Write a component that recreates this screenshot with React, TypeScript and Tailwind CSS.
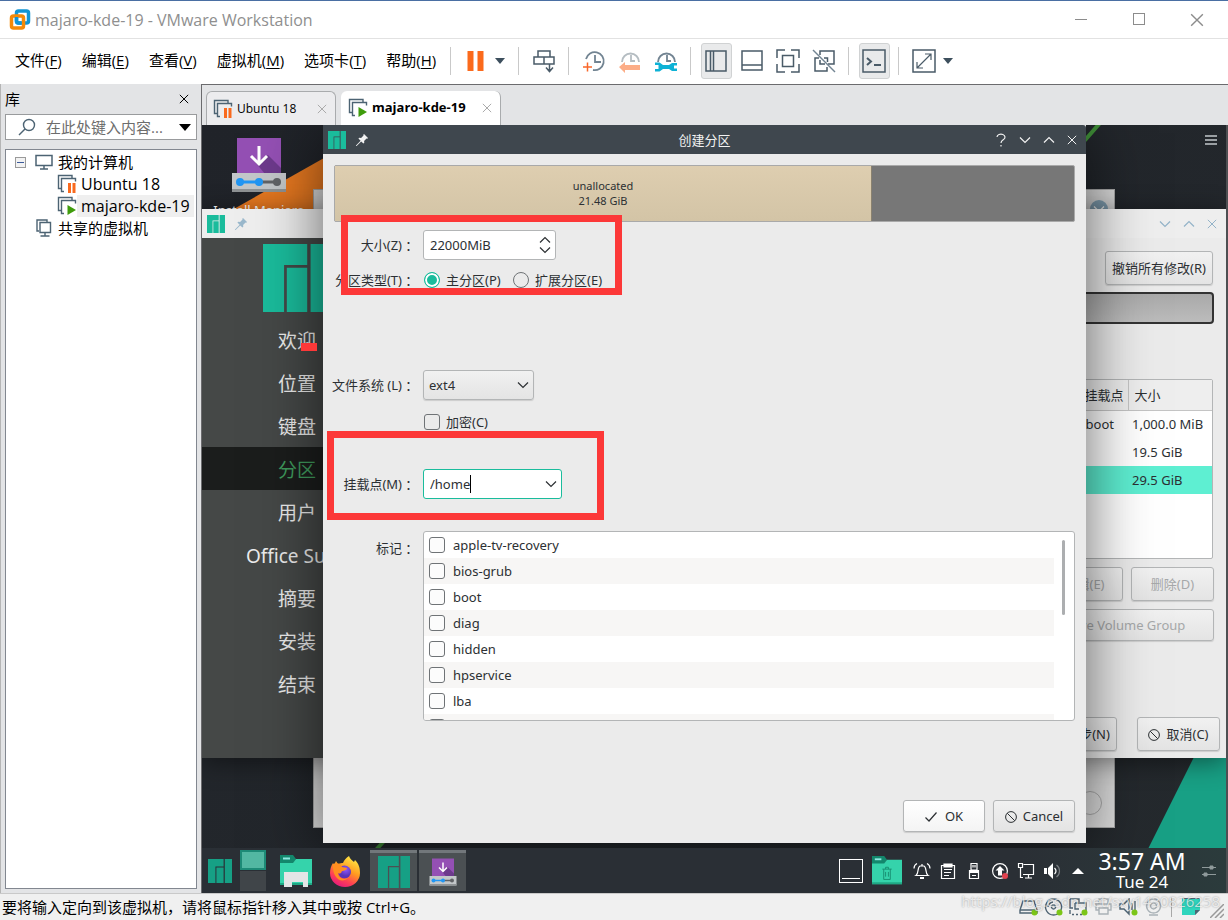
import { useState, type ReactNode } from 'react'
import clsx from 'clsx'

const MENUS = [
  ['文件', 'F'],
  ['编辑', 'E'],
  ['查看', 'V'],
  ['虚拟机', 'M'],
  ['选项卡', 'T'],
  ['帮助', 'H'],
]

const STEPS = ['欢迎', '位置', '键盘', '分区', '用户', 'Office Suite', '摘要', '安装', '结束']

const FLAGS = ['apple-tv-recovery', 'bios-grub', 'boot', 'diag', 'hidden', 'hpservice', 'lba', 'lvm']

const PARTITIONS = [
  { mount: '/boot', size: '1,000.0 MiB' },
  { mount: '', size: '19.5 GiB' },
  { mount: '', size: '29.5 GiB', selected: true },
]

const WIN = "font-['Open_Sans','Noto_Sans_CJK_SC',sans-serif]"
const KDE = "font-['Noto_Sans','Noto_Sans_CJK_SC',sans-serif]"

type ChevronProps = { up?: boolean; className?: string }

const Chevron = ({ up, className }: ChevronProps) => (
  <svg viewBox="0 0 12 8" className={clsx('h-2 w-3', className)} fill="none" stroke="currentColor" strokeWidth="1.2">
    <path d={up ? 'M1 6.5 6 1.5l5 5' : 'M1 1.5l5 5 5-5'} />
  </svg>
)

const Cross = ({ className }: { className?: string }) => (
  <svg viewBox="0 0 12 12" className={className} fill="none" stroke="currentColor" strokeWidth="1.2">
    <path d="M1 1l10 10M11 1 1 11" />
  </svg>
)

const ManjaroLogo = ({ className }: { className?: string }) => (
  <svg viewBox="0 0 100 100" className={className} fill="currentColor">
    <path d="M0 0h65v31H31v69H0zM35 35h30v65H35zM70 0h30v100H70z" />
  </svg>
)

const Pin = ({ className }: { className?: string }) => (
  <svg viewBox="0 0 12 12" className={className} fill="currentColor">
    <path d="M7.3.7 8 0l4 4-.7.7-.8-.2-2.4 2.4.2 1.8-.9.9-2.2-2.2L.6 12H0v-.6l4.6-4.6L2.4 4.6l.9-.9 1.8.2 2.4-2.4z" />
  </svg>
)

const Forbidden = () => (
  <svg viewBox="0 0 12 12" className="size-3" fill="none" stroke="currentColor">
    <circle cx="6" cy="6" r="5.4" />
    <path d="M2.2 2.2l7.6 7.6" />
  </svg>
)

const VmIcon = ({ state }: { state: 'paused' | 'running' }) => (
  <svg viewBox="0 0 20 20" className="size-5" fill="none" stroke="#4c6373" strokeWidth="1.4">
    <path d="M4.500 14.500H1.500V1.500H15v3" />
    <path d="M7 17.500H4.500V4.500H18.500v3" />
    {state === 'paused' ? (
      <path d="M12.500 9v10M17 9v10" stroke="#f96a1e" strokeWidth="3" />
    ) : (
      <path d="M10.500 9v10l8.500-5z" fill="#3f9c0c" stroke="none" />
    )}
  </svg>
)

const InstallIcon = ({ className }: { className?: string }) => (
  <svg viewBox="0 0 56 56" className={className}>
    <path d="M6 1h44v36H6z" fill="#9450b4" />
    <path d="M28 25l9-7 13 13v6H34L20 20z" fill="#6d3a8c" />
    <path d="M28 9v17M20 19l8 8 8-8" fill="none" stroke="#fff" strokeWidth="3" />
    <path d="M1 36h54v19H1z" fill="#c3c7c9" />
    <path d="M1 52h54v3H1z" fill="#909496" />
    <path d="M9 45h18" stroke="#2196f3" strokeWidth="3" />
    <path d="M28 45h18" stroke="#606366" strokeWidth="3" />
    <circle cx="9" cy="45" r="4" fill="#2196f3" />
    <circle cx="28" cy="45" r="4" fill="#2196f3" />
    <circle cx="46" cy="45" r="4" fill="#606366" />
  </svg>
)

const Sep = () => <span className="mr-[7px] ml-1.5 h-7 w-px shrink-0 bg-[#c9c9c9]" />

type ToolProps = { label: string; active?: boolean; children: ReactNode }

const Tool = ({ label, active, children }: ToolProps) => (
  <button aria-label={label} className="flex h-9 w-9 shrink-0 items-center justify-center">
    <span
      className={clsx(
        'flex h-9 w-[31px] items-center justify-center rounded-[3px]',
        active && 'border border-[#d0d2d3] bg-[#e9eaeb]',
      )}
    >
      <svg viewBox="0 0 24 24" className="size-6 shrink-0" fill="none" stroke="#4a5b68" strokeWidth="1.5">
        {children}
      </svg>
    </span>
  </button>
)

const Caret = ({ label }: { label: string }) => (
  <button aria-label={label} className="flex h-9 w-3 shrink-0 items-center justify-center">
    <svg viewBox="0 0 10 6" className="h-1.5 w-2.5" fill="#3d4f5d">
      <path d="M0 0h10L5 6z" />
    </svg>
  </button>
)

const TitleBar = () => (
  <header className="flex h-[38px] shrink-0 items-center border-t border-[#4a6fa3] bg-white pl-2">
    <svg viewBox="0 0 24 24" className="size-6" fill="none" strokeWidth="3.500">
      <rect x="8.500" y="3" width="12" height="12" rx="2" stroke="#1295d3" />
      <rect x="3.500" y="8" width="12" height="12" rx="2" stroke="#f58a07" />
      <path d="M8.500 9v4a2 2 0 0 0 2 2h3" stroke="#1295d3" />
    </svg>
    <h1 className="ml-[3px] flex-1 text-base text-[#8f8f8f]">majaro-kde-19 - VMware Workstation</h1>
    <div className="flex text-[#8c8c8c]">
      <button aria-label="最小化" className="flex w-[58px] justify-center">
        <span className="h-px w-3 self-center bg-[#8c8c8c]" />
      </button>
      <button aria-label="最大化" className="flex w-[58px] justify-center">
        <span className="size-3 border border-[#8c8c8c]" />
      </button>
      <button aria-label="关闭" className="mr-[2px] flex w-[58px] justify-center">
        <Cross className="size-3.5" />
      </button>
    </div>
  </header>
)

const MenuBar = () => (
  <div className="flex h-[46px] shrink-0 items-center border-t border-[#e2e2e2] bg-white pb-0.5 pl-[5px]">
    <nav className="flex w-[439px] shrink-0 text-[15px]">
      {MENUS.map(([name, key]) => (
        <button key={key} className="shrink-0 px-2.5 whitespace-nowrap">
          {name}(<u className="underline-offset-2">{key}</u>)
        </button>
      ))}
    </nav>
    <Sep />
    <Tool label="挂起">
      <path d="M6.500 2v20M16.500 2v20" stroke="#fb6a1c" strokeWidth="6" />
    </Tool>
    <Caret label="电源选项" />
    <span className="w-1.5" />
    <Sep />
    <Tool label="发送 Ctrl+Alt+Del">
      <path d="M6 2h12v6H6zM2 8h10v7H2zM12 8h10v7H12zM17.500 15v6M14 18.500l3.500 4 3.500-4" />
    </Tool>
    <Sep />
    <Tool label="拍摄快照">
      <path d="M4 10a9 9 0 1 1 7 11M13 6v7h6" stroke="#728492" strokeWidth="1.8" />
      <path d="M1 18h9M5.500 13.500v9" stroke="#f9672a" />
    </Tool>
    <Tool label="恢复快照">
      <path d="M4 13a8.500 8.500 0 1 1 17 0M13 6v6h4" stroke="#b5bdc2" strokeWidth="1.8" />
      <path d="M1 18l6-5v3h15v5H7v3z" fill="#fcad87" stroke="none" />
    </Tool>
    <Tool label="管理快照">
      <path d="M4 13a8.500 8.500 0 1 1 17 0M13 6v6h4" stroke="#728492" strokeWidth="1.8" />
      <path d="M1 13.500h4.500L9 16h6l3-2h5v2.500h-3v3h3V22h-5l-3-2H9l-3.500 2.500H1V20h3.500v-4H1z" fill="#0eb2d6" stroke="none" />
    </Tool>
    <Sep />
    <Tool label="显示库" active>
      <path d="M2 2h20v20H2zM6.500 2v20M9.500 2v20" />
    </Tool>
    <Tool label="缩略图栏">
      <path d="M2 2h20v19H2zM2 16h20" />
    </Tool>
    <Tool label="控制台视图">
      <path d="M6.500 6.500h11v11h-11zM1 9V1h8M15 1h8v8M1 15v8h8M15 23h8v-8" />
    </Tool>
    <Tool label="Unity">
      <path d="M8 6V2h14v13h-6M7 9H3v13h12v-4M12 9h3.500v4M8 11v4h5" />
      <path d="M1 1l22 22" stroke="#728492" />
    </Tool>
    <Sep />
    <Tool label="控制台" active>
      <path d="M1 1h22v22H1z" />
      <path d="M5 9l4 3.500L5 16M12 16h7" strokeWidth="2" />
    </Tool>
    <Sep />
    <Tool label="全屏">
      <path d="M1 1h22v22H1z" />
      <path d="M5 19 19 5M13 5h6v6M5 13v6h6" strokeWidth="1.200" />
    </Tool>
    <Caret label="全屏选项" />
  </div>
)

const Library = () => (
  <aside className="flex w-[201px] shrink-0 flex-col border-l border-[#b5b5b5] bg-[#e3e4e6] pr-1 pb-1 pl-1 text-[15px]">
    <div className="flex h-[30px] items-center justify-between pr-2">
      <h2>库</h2>
      <button aria-label="关闭库">
        <Cross className="size-2.5" />
      </button>
    </div>
    <label className="flex h-[26px] items-center border border-[#999b9d] bg-white pr-[5px] pl-3">
      <svg viewBox="0 0 18 18" className="size-[18px] shrink-0" fill="none" stroke="#4c6373" strokeWidth="1.400">
        <circle cx="11" cy="7" r="5.500" />
        <path d="M7 11l-6 6" />
      </svg>
      <input
        aria-label="搜索"
        placeholder="在此处键入内容..."
        className="ml-2.5 w-0 flex-1 outline-none placeholder:text-[#6d6d6d]"
      />
      <svg viewBox="0 0 12 7" className="h-[7px] w-3">
        <path d="M0 0h12L6 7z" />
      </svg>
    </label>
    <ul className="mt-[9px] flex-1 border border-[#828790] bg-white pt-px [&>li]:flex [&>li]:h-[22px] [&>li]:items-center">
      <li className="pl-[9px]">
        <button aria-label="折叠" className="flex size-[11px] items-center justify-center border border-[#9a9a9a] bg-[#f2f2f2]">
          <span className="h-px w-[7px] bg-[#3b5a9a]" />
        </button>
        <svg viewBox="0 0 20 16" className="mr-1 ml-2 h-4 w-5" fill="none" stroke="#4c6373" strokeWidth="1.500">
          <path d="M2 1.500h16v10H2zM10 12v3M6 15h8" />
        </svg>
        我的计算机
      </li>
      <li className="pl-[51px]">
        <VmIcon state="paused" />
        <span className="px-1 text-base leading-[22px]">Ubuntu 18</span>
      </li>
      <li className="pl-[51px]">
        <VmIcon state="running" />
        <span className="bg-[#efefef] px-1 text-base leading-[22px] whitespace-nowrap">majaro-kde-19</span>
      </li>
      <li className="pl-7">
        <svg viewBox="0 0 20 20" className="mr-1 size-5" fill="none" stroke="#4c6373" strokeWidth="1.400">
          <path d="M5 13H3V2h10v2M6 4.500h10.500v10H6zM11 14v4M6.500 18h9" />
        </svg>
        共享的虚拟机
      </li>
    </ul>
  </aside>
)

const Tabs = () => (
  <div className="flex h-10 items-end gap-[5px] bg-[#e3e4e6] pt-1.5 pl-1 text-[13px]">
    <div className="flex h-full w-[130px] items-center rounded-t-md border border-b-0 border-[#a9abad] bg-[#ececee] pr-2 pl-1.5">
      <VmIcon state="paused" />
      <button className="ml-1 flex-1 text-left text-xs">Ubuntu 18</button>
      <button aria-label="关闭 Ubuntu 18" className="text-[#aaa]">
        <Cross className="size-2.5" />
      </button>
    </div>
    <div className="flex h-full w-40 items-center rounded-t-md border-r border-[#a9abad] bg-white pr-2 pl-[7px]">
      <VmIcon state="running" />
      <button className="ml-1 flex-1 text-left font-bold whitespace-nowrap">majaro-kde-19</button>
      <button aria-label="关闭 majaro-kde-19" className="text-[#aaa]">
        <Cross className="size-2.5" />
      </button>
    </div>
  </div>
)

const Wallpaper = () => (
  <svg viewBox="0 0 1024 768" preserveAspectRatio="none" className="absolute inset-0 h-full w-full">
    <defs>
      <linearGradient id="night" x2="1" y2="1">
        <stop offset="0" stopColor="#202329" />
        <stop offset="1" stopColor="#252a2e" />
      </linearGradient>
    </defs>
    <path d="M0 0h1024v768H0z" fill="url(#night)" />
    <path d="M30 85 122 33V85z" fill="#e67820" />
    <path d="M870 30 898-2M160 740l24-26" stroke="#409038" strokeWidth="4" />
    <path d="M1024 568v200H924z" fill="#18a085" />
  </svg>
)

const kdeButton =
  'flex items-center justify-center rounded-[3px] border border-[#b3b5b6] bg-linear-to-b from-[#f1f1f1] to-[#e4e4e4] shadow-[0_1px_1px_#0002] whitespace-nowrap'

const Installer = () => (
  <section className="absolute inset-x-0 top-[84px] flex h-[549px] flex-col overflow-hidden bg-[#ebebeb] shadow-[0_4px_24px_#0007]">
    <div className="flex h-[29px] shrink-0 items-center bg-[#eeeeee] px-[5px]">
      <ManjaroLogo className="size-[18px] text-[#1abc9c]" />
      <Pin className="ml-2.5 size-3 text-[#9ab8cc]" />
      <div className="ml-auto flex items-center gap-3 pr-1 text-[#93b3c8]">
        <button aria-label="最小化">
          <Chevron />
        </button>
        <button aria-label="最大化">
          <Chevron up />
        </button>
        <button aria-label="关闭">
          <Cross className="size-2.5" />
        </button>
      </div>
    </div>
    <div className="flex flex-1">
      <aside className="flex w-[190px] shrink-0 flex-col items-center bg-[#454847] pt-1.5 text-[19px] text-[#ececec]">
        <ManjaroLogo className="size-[68px] text-[#1abc9c]" />
        <ol className="mt-1.5 w-full">
          {STEPS.map(step => (
            <li
              key={step}
              className={clsx('flex h-[43px] items-center justify-center pt-1', step === '分区' && 'bg-[#1b1d1c] text-[#3f9b5d]')}
            >
              {step}
            </li>
          ))}
        </ol>
      </aside>
      <div className="flex flex-1 flex-col items-end pr-3 text-[13px] text-[#2c3033]">
        <button className={clsx(kdeButton, 'mt-[13px] mr-px h-[34px] w-[108px] pt-0.5')}>撤销所有修改(R)</button>
        <div className="mt-[7px] h-8 w-[620px] rounded-[4px] border-2 border-[#333] bg-linear-to-b from-[#a9a9a9] to-[#bcbcbc]" />
        <div className="mt-[55px] mr-px h-[180px] w-[620px] rounded-[2px] border border-[#b3b5b6] bg-white">
          <table className="ml-auto w-[180px] table-fixed">
            <thead>
              <tr className="h-[30px] bg-[#eeeeee] text-left [&>th]:border-b [&>th]:border-[#c4c4c4] [&>th]:pt-0.5 [&>th]:font-normal">
                <th className="w-24 border-r pr-1 text-right">挂载点</th>
                <th className="pl-1.5">大小</th>
              </tr>
            </thead>
            <tbody>
              {PARTITIONS.map(p => (
                <tr key={p.size} className={clsx('h-7 whitespace-nowrap', p.selected && 'bg-[#5eefd2]')}>
                  <td className="pr-3.5 text-right">{p.mount}</td>
                  <td className="pt-px pl-1">{p.size}</td>
                </tr>
              ))}
            </tbody>
          </table>
        </div>
        <div className="mt-2 flex gap-2 text-[#a6a8a9]">
          <button disabled className={clsx(kdeButton, 'h-[34px] w-[83px] pt-0.5 pl-[5px]')}>
            编辑(E)
          </button>
          <button disabled className={clsx(kdeButton, 'h-[34px] w-[83px] pt-0.5')}>
            删除(D)
          </button>
        </div>
        <button disabled className={clsx(kdeButton, 'mt-2 h-8 w-[206px] pt-px pl-2 text-[#a6a8a9]')}>
          Remove Volume Group
        </button>
        <div className="mt-auto mb-[7px] flex gap-5 self-end">
          <button className={clsx(kdeButton, 'h-[34px] w-[83px] pt-0.5 pl-3')}>下一步(N)</button>
          <button className={clsx(kdeButton, '-mr-1.5 h-[34px] w-[83px] gap-1.5 pt-0.5')}>
            <Forbidden />
            取消(C)
          </button>
        </div>
      </div>
    </div>
  </section>
)

type RowProps = { label?: string; htmlFor?: string; className?: string; children: ReactNode }

const Row = ({ label, htmlFor, className, children }: RowProps) => (
  <div className={clsx('grid min-h-[30px] grid-cols-[81px_1fr] items-center gap-x-2', className)}>
    {label ? (
      <label htmlFor={htmlFor} className="flex justify-end pt-0.5 whitespace-nowrap">
        {label}
        <span className="font-['Noto_Sans_CJK_TC',sans-serif]">：</span>
      </label>
    ) : (
      <span />
    )}
    {children}
  </div>
)

const box = 'size-4 shrink-0 appearance-none rounded-[3px] border border-[#6f7376] bg-[#fcfcfc] checked:bg-[#1abc9c]'
const radio =
  'size-4 shrink-0 appearance-none rounded-full border border-[#6f7376] checked:border-[#1abc9c] checked:bg-[#1abc9c] checked:shadow-[inset_0_0_0_2px_#fff]'

const PartitionDialog = () => {
  const [size, setSize] = useState('22000MiB')
  const [mount, setMount] = useState('/home')
  const [type, setType] = useState('primary')

  return (
    <section className="absolute top-0 right-[140px] left-[121px] flex h-[718px] flex-col bg-[#ebebeb] text-[13px] text-[#2c3033] shadow-[0_8px_60px_#0009]">
      <div className="flex h-[29px] shrink-0 items-center rounded-tr-[3px] bg-[#3f474e] px-[5px] text-[#f2f2f2]">
        <ManjaroLogo className="size-[18px] text-[#1abc9c]" />
        <Pin className="ml-2.5 size-3" />
        <h2 className="flex-1 pt-0.5 pl-[46px] text-center">创建分区</h2>
        <div className="flex items-center gap-3 pr-1">
          <button aria-label="帮助">
            <svg viewBox="0 0 12 14" className="h-3.5 w-3" fill="none" stroke="currentColor" strokeWidth="1.200">
              <path d="M2 4a4 3 0 1 1 6.500 2.500C7 7.500 6 8 6 10M6 12v1.500" />
            </svg>
          </button>
          <button aria-label="最小化">
            <Chevron />
          </button>
          <button aria-label="最大化">
            <Chevron up />
          </button>
          <button aria-label="关闭">
            <Cross className="size-2.5" />
          </button>
        </div>
      </div>

      <form className="flex flex-1 flex-col px-[11px] pt-[11px] pb-[11px]" onSubmit={e => e.preventDefault()}>
        <div className="flex h-[57px] shrink-0 rounded-[2px] border border-[#a9a9a9] bg-[#777] text-[11px] leading-[15px]">
          <div className="flex w-[537px] flex-col items-center justify-center border-r border-[#8a8270] bg-linear-to-b from-[#deceb0] to-[#d3c4a6] pb-0.5">
            <span>unallocated</span>
            <span>21.48 GiB</span>
          </div>
        </div>

        <Row label="大小(Z)" htmlFor="size" className="mt-2">
          <div className="flex h-[30px] w-[133px] items-center rounded-[3px] border border-[#b3b5b6] bg-white pr-1 pl-1.5">
            <input id="size" value={size} onChange={e => setSize(e.target.value)} className="w-0 flex-1 pt-px outline-none" />
            <span className="flex flex-col gap-0.5">
              <button type="button" aria-label="增加">
                <Chevron up className="block" />
              </button>
              <button type="button" aria-label="减少">
                <Chevron className="block" />
              </button>
            </span>
          </div>
        </Row>
        <Row label="分区类型(T)" htmlFor="primary" className="mt-[5px]">
          <div className="flex items-center">
            <input
              id="primary"
              type="radio"
              name="type"
              className={clsx(radio, 'ml-px')}
              checked={type === 'primary'}
              onChange={() => setType('primary')}
            />
            <label htmlFor="primary" className="ml-1.5 w-[67px] pt-0.5">
              主分区(P)
            </label>
            <input
              id="extended"
              type="radio"
              name="type"
              className={radio}
              checked={type === 'extended'}
              onChange={() => setType('extended')}
            />
            <label htmlFor="extended" className="ml-1.5 pt-0.5">
              扩展分区(E)
            </label>
          </div>
        </Row>
        <Row label="文件系统 (L)" htmlFor="fs" className="mt-[75px]">
          <div className="relative w-[111px]">
            <select id="fs" className={clsx(kdeButton, 'h-[30px] w-full appearance-none pt-px pl-[5px]')}>
              <option>ext4</option>
            </select>
            <Chevron className="pointer-events-none absolute top-[11px] right-[5px]" />
          </div>
        </Row>
        <Row className="mt-[7px]">
          <label className="flex items-center pl-px">
            <input type="checkbox" className={clsx(box, 'bg-transparent')} />
            <span className="pt-0.5 pl-1.5">加密(C)</span>
          </label>
        </Row>
        <Row label="挂载点(M)" htmlFor="mount" className="mt-8">
          <div className="relative flex h-[30px] w-[139px] items-center rounded-[3px] border border-[#1abc9c] bg-white pr-1 pl-1.5">
            <input id="mount" value={mount} onChange={e => setMount(e.target.value)} className="w-0 flex-1 pt-px outline-none" />
            <span className="absolute top-[5px] left-[46px] h-[18px] w-px bg-black" />
            <button type="button" aria-label="选择挂载点">
              <Chevron />
            </button>
          </div>
        </Row>
        <div className="mt-8 grid grid-cols-[81px_1fr] gap-x-2">
          <span className="flex justify-end pt-2 whitespace-nowrap">
            标记<span className="font-['Noto_Sans_CJK_TC',sans-serif]">：</span>
          </span>
          <div className="flex h-[190px] overflow-hidden rounded-[3px] border border-[#b3b5b6] bg-white">
            <ul className="flex-1">
              {FLAGS.map(flag => (
                <li key={flag} className="h-[26px] even:bg-[#f7f6f5]">
                  <label className="flex h-full items-center gap-2 pl-[5px]">
                    <input type="checkbox" className={box} />
                    <span className="pt-px">{flag}</span>
                  </label>
                </li>
              ))}
            </ul>
            <span className="mt-2 mr-[9px] ml-[8px] h-[75px] w-[3px] rounded-full bg-[#acaeb0]" />
          </div>
        </div>

        <div className="mt-auto flex justify-end gap-2 pt-4">
          <button className={clsx(kdeButton, 'h-8 w-[82px] gap-2 from-white to-[#f4f4f4] pt-px')}>
            <svg viewBox="0 0 12 10" className="h-2.5 w-3" fill="none" stroke="currentColor" strokeWidth="1.200">
              <path d="M.5 5.500 4 9l7.500-8.500" />
            </svg>
            OK
          </button>
          <button type="button" className={clsx(kdeButton, 'h-8 w-[82px] gap-1.5 pt-px')}>
            <Forbidden />
            Cancel
          </button>
        </div>
      </form>

      {/* highlight frames */}
      <div className="pointer-events-none absolute top-[90px] left-[18px] h-20 w-[281px] border-[7px] border-[#fc3838]" />
      <div className="pointer-events-none absolute top-[306px] left-1 h-[89px] w-[277px] border-[7px] border-[#fc3838]" />
    </section>
  )
}

const Folder = ({ className, children }: { className?: string; children: ReactNode }) => (
  <svg viewBox="0 0 32 32" className={className}>
    <path d="M0 0h13l3 4-3 5H0z" fill="#13876c" />
    <path d="M0 8h13l3-4h16v26H0z" fill="#35d3ab" />
    <path d="M0 28h32v2H0z" fill="#1fa884" />
    <path d="M3 3.500h7" stroke="#8fe8e0" strokeWidth="2" />
    {children}
  </svg>
)

const Firefox = () => (
  <svg viewBox="0 0 32 32" className="size-8">
    <defs>
      <linearGradient id="fox" x1=".8" y1="0" x2=".3" y2="1">
        <stop offset="0" stopColor="#fff24a" />
        <stop offset=".45" stopColor="#ff9a1f" />
        <stop offset=".75" stopColor="#ff4055" />
        <stop offset="1" stopColor="#e61a7e" />
      </linearGradient>
      <radialGradient id="globe" cx=".6" cy=".3">
        <stop offset="0" stopColor="#9059ff" />
        <stop offset="1" stopColor="#5a34b8" />
      </radialGradient>
    </defs>
    <path
      d="M20 1c1 3 3 4 5 6l1-2c4 4 5 8 5 13a15 14 0 0 1-30 0c0-4 1-7 3-10l1 2 2-4 2 3c2-1 4-1 5-1 1-3 3-5 6-7z"
      fill="url(#fox)"
    />
    <circle cx="15.500" cy="17" r="6.500" fill="url(#globe)" />
    <path d="M4 9c4-2 8 0 9 3l5 1c0 2-3 3-5 3-1 3-3 3-4 2 0 5 6 7 10 5-6 6-16 1-15-14z" fill="#ff8f20" />
  </svg>
)

const Tray = ({ label, children }: { label: string; children: ReactNode }) => (
  <button aria-label={label}>
    <svg viewBox="0 0 16 16" className="size-4 overflow-visible" fill="none" stroke="#fff" strokeWidth="1.200">
      {children}
    </svg>
  </button>
)

const Panel = () => (
  <footer className="absolute inset-x-0 bottom-0 flex h-[45px] items-center bg-linear-to-r from-[#2a2f35] from-80% to-[#2b3b3c] pr-2.5 pl-1.5 text-white">
    <button aria-label="应用程序菜单">
      <ManjaroLogo className="size-6 text-[#16a085]" />
    </button>
    <div className="ml-2 flex w-[26px] flex-col gap-px">
      <button aria-label="桌面 1" className="h-5 border-2 border-[#1d8a76] bg-[#52b7a2]" />
      <button aria-label="桌面 2" className="h-5 bg-[#404549]" />
    </div>
    <button aria-label="文件管理器" className="ml-3.5">
      <Folder className="size-8">
        <path d="M4 17h24v15h-5v-5H12v5H4z" fill="#e4e5e6" />
      </Folder>
    </button>
    <button aria-label="Firefox" className="ml-[17px]">
      <Firefox />
    </button>
    <button aria-label="Manjaro Hello" className="ml-[9px] flex h-[41px] w-[47px] items-center justify-center border-t-[3px] border-[#72777b] bg-[#4b5053]">
      <ManjaroLogo className="size-8 text-[#16a085]" />
    </button>
    <button aria-label="安装程序" className="ml-0.5 flex h-[41px] w-[47px] items-center justify-center border-t-[3px] border-[#72777b] bg-[#4b5053]">
      <InstallIcon className="size-7" />
    </button>
    <div className="ml-auto flex items-center gap-2.5">
      <button aria-label="显示桌面" className="flex size-6 items-end justify-center border border-white pb-[3px]">
        <span className="h-px w-[18px] bg-white" />
      </button>
      <button aria-label="回收站" className="mr-0.5 -ml-px">
        <Folder className="size-[30px]">
          <path d="M11 14h10M12.500 14v11h7V14M14.500 14v-2h3v2M14.500 17v5M17.500 17v5" fill="none" stroke="#178d70" />
        </Folder>
      </button>
      <Tray label="通知">
        <path d="M2 12.500c3-2 1-8 4-9.500h4c3 1.500 1 7.500 4 9.500zM8 1v2" />
        <path d="M6 14h4v2H6z" fill="#fff" stroke="none" />
        <path d="M3 .5C1 1.500 0 3 0 5.500M13 .5c2 1 3 2.500 3 5" />
      </Tray>
      <Tray label="剪贴板">
        <path d="M1.500 2.500h13v13h-13zM4 6.500h8M4 9.500h7M4 12.500h5" />
        <path d="M4 1h8v3H4z" fill="#fff" />
      </Tray>
      <Tray label="设备">
        <path d="M5 .5h6V7H5zM7 2v2.500M9 2v2.500" />
        <path d="M3.500 7.500h9v8h-9zM6 12.500h4" />
        <path d="M3 7h10v3H3z" fill="#fff" stroke="none" />
      </Tray>
      <Tray label="更新">
        <circle cx="8" cy="8" r="7.400" />
        <path d="M8 3l4.500 4.500H10v5H6v-5H3.500z" fill="#fff" stroke="none" />
        <circle cx="13" cy="13" r="3" fill="#e0424f" stroke="none" />
      </Tray>
      <Tray label="网络">
        <path d="M5.500 1.500h10v10H5M7 15h7M10.500 12v3M.5.500h4v4h-4zM2.500 5v9.500H5" />
      </Tray>
      <Tray label="音量">
        <path d="M0 5h3v6H0zM4 5l5-5v16l-5-5z" fill="#fff" stroke="none" />
        <path d="M10.500 5c2 2 2 4 0 6" />
        <path d="M12.500 2c4 3 4 9 0 12" stroke="#777c80" />
      </Tray>
      <Tray label="更多">
        <path d="M2 11h12L8 5z" fill="#fff" stroke="none" />
      </Tray>
      <div className="ml-0.5 flex w-[88px] flex-col items-center whitespace-nowrap">
        <time className="text-[23px] leading-[22px]">3:57 AM</time>
        <time className="text-[17px] leading-5">Tue 24</time>
      </div>
      <button aria-label="面板设置" className="ml-1.5">
        <svg viewBox="0 0 14 12" className="h-3 w-3.5" fill="none" stroke="#8f9a9b">
          <path d="M0 2.500h14M0 9.500h14" />
          <path d="M8 1h3v3H8zM2 8h3v3H2z" fill="#8f9a9b" />
        </svg>
      </button>
    </div>
  </footer>
)

const Desktop = () => (
  <main className={clsx('relative flex-1 overflow-hidden border-r-2 border-[#4d4f52] bg-[#22262b]', KDE)}>
    <Wallpaper />
    <div className="absolute top-3 left-0 flex w-[114px] flex-col items-center text-[13px] text-white">
      <InstallIcon className="size-14" />
      <span className="mt-2 whitespace-nowrap">Install Manjaro</span>
    </div>
    <button aria-label="桌面菜单" className="absolute top-2.5 right-[9px] flex flex-col gap-0.5 [&>span]:h-0.5 [&>span]:w-3 [&>span]:bg-[#9a9fa3]">
      <span />
      <span />
      <span />
    </button>
    <section className="absolute inset-x-[111px] top-[64px] h-[639px] border border-[#a9a9a9] bg-[#dedede]">
      <span className="absolute top-2.5 right-1.5 flex size-[18px] items-center justify-center rounded-full bg-[#86a5b8] text-white">
        <Chevron className="w-2" />
      </span>
      <span className="absolute right-3 bottom-3 size-6 rounded-full border border-[#aaa]" />
    </section>
    <Installer />
    <PartitionDialog />
    <div className="absolute top-[218px] left-[99px] h-2 w-4 bg-[#fc3838]" />
    <Panel />
  </main>
)

const DEVICES = [
  { name: '硬盘', on: true, d: 'M4 3h11l3 9v3H1v-3zM1 12h17' },
  { name: 'CD/DVD', on: true, d: 'M9.500 1a8 8 0 1 0 .1 0M9.500 7a2 2 0 1 0 .1 0M4 9a6 6 0 0 1 5-5' },
  { name: '网络适配器', on: true, d: 'M1 1h9v3M1 1v9h3M6 5h11v8M6 5v6h4M10 1v3M1 12v4M3 16.500h2M7 16.500h2M11 16.500h2' },
  { name: '打印机', on: false, d: 'M5 6V1h9v5M5 12H2V6h15v6h-3M5 10h9v6H5z' },
  { name: '声卡', on: true, d: 'M1 6h4l5-5v15l-5-5H1zM13 5v7M16 3v10' },
  { name: '摄像头', on: false, d: 'M9.500 1a7 7 0 1 0 .1 0M9.500 5a3 3 0 1 0 .1 0M5 17h9' },
]

const StatusBar = () => (
  <footer className="relative flex h-[27px] shrink-0 items-center border-t border-[#c9c9c9] bg-[#f0f0f0] pl-0.5 text-[15px]">
    <p className="flex-1 pt-px whitespace-nowrap">要将输入定向到该虚拟机，请将鼠标指针移入其中或按 Ctrl+G。</p>
    <div className="flex items-center gap-1.5 pr-7">
      {DEVICES.map(dev => (
        <button key={dev.name} aria-label={dev.name}>
          <svg viewBox="0 0 19 18" className="h-[18px] w-[19px]" fill="none" stroke={dev.on ? '#4f6473' : '#a9b1b6'} strokeWidth="1.400">
            <path d={dev.d} />
            {dev.on && <circle cx="15.500" cy="14.500" r="3" fill="#7cc518" stroke="none" />}
          </svg>
        </button>
      ))}
      <span className="ml-0.5 h-5 w-px bg-[#a8a8a8]" />
      <button aria-label="消息" className="ml-1">
        <svg viewBox="0 0 18 18" className="size-[18px]">
          <path d="M0 0h18v12l-5 5H0z" fill="#2fd5bd" />
          <path d="M18 12h-5v5z" fill="#4f6473" />
          <path d="M.5.500h17" stroke="#4f6473" />
        </svg>
      </button>
    </div>
    <svg viewBox="0 0 14 14" className="absolute right-1 bottom-0.5 size-3.5" stroke="#999" strokeWidth="1.500">
      <path d="M0 14 14 0M5 14l9-9M10 14l4-4" />
    </svg>
    <span className="pointer-events-none absolute -top-1 right-2 text-[15px] leading-[22px] whitespace-nowrap text-white/70 [text-shadow:0_0_2px_#0006]">
      https://blog.csdn.net/sxy1430826258
    </span>
  </footer>
)

export default function App() {
  return (
    <div className={clsx('flex h-screen min-h-[720px] flex-col bg-[#e3e4e6] text-black', WIN)}>
      <TitleBar />
      <MenuBar />
      <div className="flex min-h-0 flex-1">
        <Library />
        <div className="flex min-w-0 flex-1 flex-col border-t border-l border-[#6b6b6e]">
          <Tabs />
          <Desktop />
        </div>
      </div>
      <StatusBar />
    </div>
  )
}
